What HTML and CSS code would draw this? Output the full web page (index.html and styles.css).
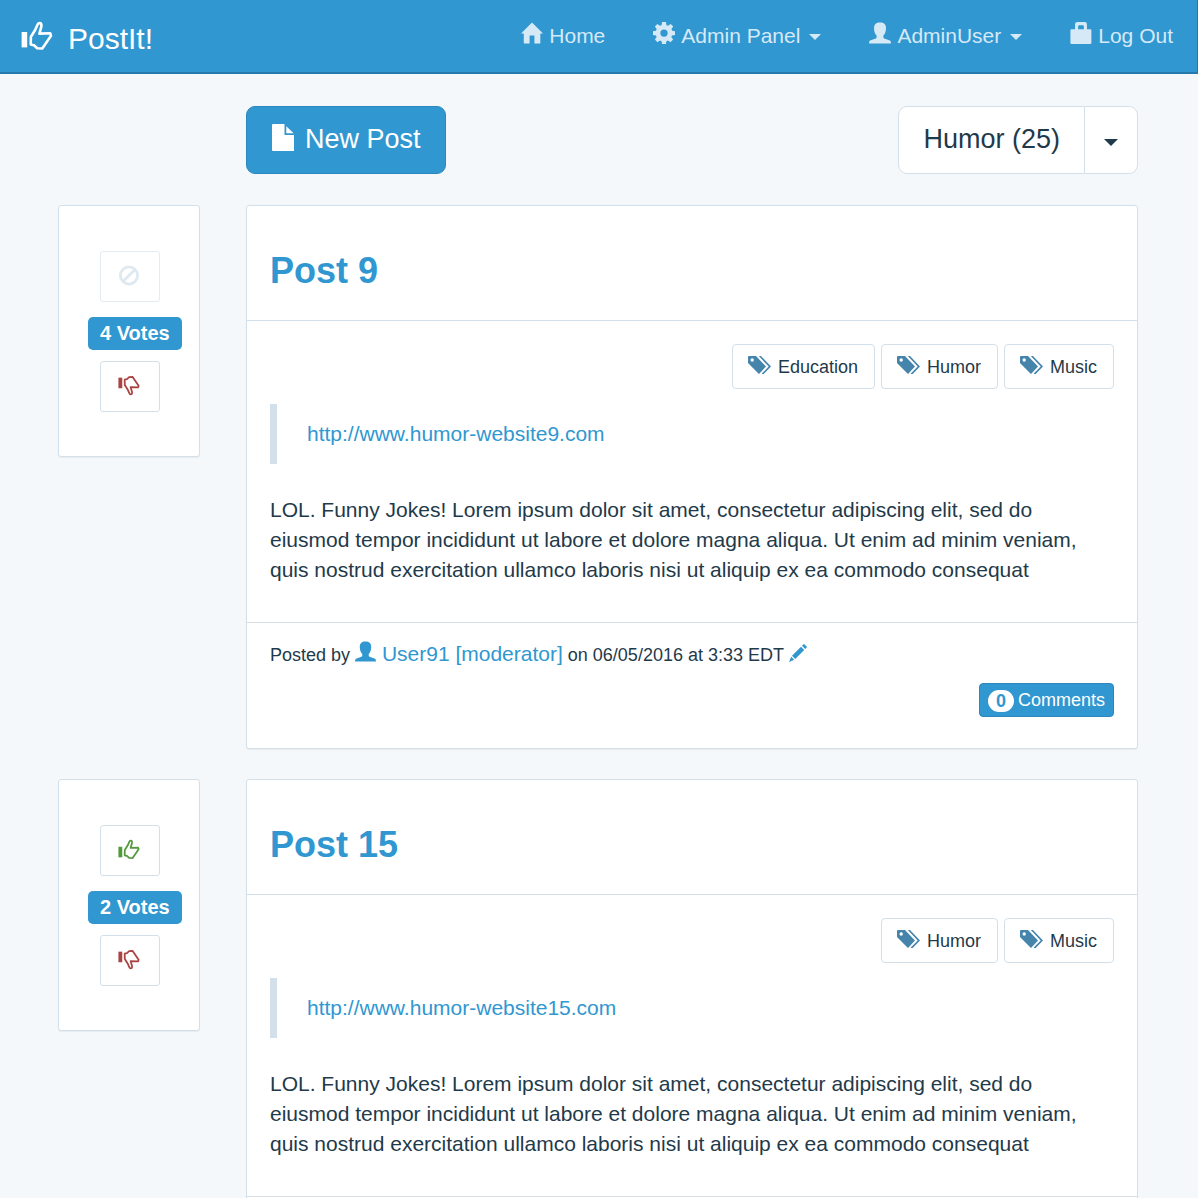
FILE: index.html
```html
<!DOCTYPE html>
<html lang="en">
<head>
<meta charset="utf-8">
<meta name="viewport" content="width=device-width, initial-scale=1">
<title>PostIt!</title>
<link rel="stylesheet" href="styles.css">
</head>
<body>
<svg class="sprite" aria-hidden="true">
  <symbol id="thumb" viewBox="0 0 32 30">
    <rect x="0.6" y="11" width="5.6" height="15.4" fill="currentColor"/>
    <path d="M9.9 15.7 9.7 23.4 13 24.2 16.2 27.2 21.3 27.5 30 14.8 29.2 12.2 18.4 12.6 20.4 5.4Q20.8 2 18.6 2.1 17 2 16.4 4L14 9.2Z" fill="none" stroke="currentColor" stroke-width="2.6" stroke-linejoin="round"/>
  </symbol>
  <symbol id="home" viewBox="0 0 23 22">
    <path d="M11.5 0 23 11.5H20.2V22H14V13.6H9V22H2.9V11.5H0Z" fill="currentColor"/>
  </symbol>
  <symbol id="cog" viewBox="0 0 21 21">
    <path fill="currentColor" fill-rule="evenodd" d="M8.7 0h3.6l.6 3 1.4.6L16.9 2l2.4 2.4-1.7 2.4.7 1.6 2.7.5v3.5l-2.9.5-.6 1.5 1.7 2.4-2.5 2.5-2.4-1.7-1.5.7-.5 2.9H8.7l-.5-2.9-1.6-.7-2.3 1.7-2.5-2.5 1.7-2.4-.7-1.5L0 12.4V8.9l2.8-.5.7-1.6-1.7-2.4L4.2 2l2.5 1.6L8.1 3ZM10.5 7.1a3.5 3.5 0 1 0 0 7 3.5 3.5 0 0 0 0-7Z"/>
  </symbol>
  <symbol id="user" viewBox="0 0 22 21">
    <path fill="currentColor" d="M11 0C15 0 17 2 17 5.6 17 9 16 11.9 14.4 13V15C14.4 15.5 14.6 15.7 15.2 16L21 18Q22 18.6 22 21H0Q0 18.6 1 18L6.8 16C7.4 15.7 7.6 15.5 7.6 15V13C6 11.9 5 9 5 5.6 5 2 7 0 11 0Z"/>
  </symbol>
  <symbol id="lock" viewBox="0 0 21 21">
    <path fill="currentColor" fill-rule="evenodd" d="M4.8 7V2.2Q4.8 0 7 0h7q2.2 0 2.2 2.2V7h3.2q1 0 1 1v12q0 1-1 1H1.4q-1 0-1-1V8q0-1 1-1ZM7.8 7h5.4V4.2q0-1.2-1.2-1.2H9q-1.2 0-1.2 1.2Z"/>
  </symbol>
  <symbol id="file" viewBox="0 0 22 27">
    <path fill="currentColor" d="M0 1q0-1 1-1h11.5v11H22v16H1q-1 0-1-1ZM14.3 2.3 21.6 9.2H14.3Z"/>
  </symbol>
  <symbol id="ban" viewBox="0 0 22 22">
    <g fill="none" stroke="currentColor" stroke-width="3"><circle cx="11" cy="11" r="9"/><path d="M4.6 17.4 17.4 4.6"/></g>
  </symbol>
  <symbol id="tags" viewBox="0 0 23 18">
    <path fill="currentColor" fill-rule="evenodd" d="M0 1Q0 0 1 0H8L18 10.5 11 18 0 7ZM4.2 2.3a1.7 1.7 0 1 0 0 3.4 1.7 1.7 0 0 0 0-3.4Z"/>
    <path fill="currentColor" d="M10.8 0h2.2L23 10.6 15.7 18h-1.6L13.8 17.6 20.7 10.6Z"/>
  </symbol>
  <symbol id="pencil" viewBox="0 0 18 18">
    <path fill="currentColor" d="M14.4.4q.6-.6 1.2 0l2 2q.6.6 0 1.2L16.2 5 13 1.8ZM12 2.8 15.2 6 6.2 15 3 11.8ZM2.2 12.8 5.2 15.8 0 18Z"/>
  </symbol>
</svg>

<header class="navbar">
  <a class="brand" href="#"><svg class="icon-brand" aria-hidden="true"><use href="#thumb"/></svg>PostIt!</a>
  <nav class="nav">
    <a class="nav-item" href="#"><svg class="icon-nav" aria-hidden="true"><use href="#home"/></svg>Home</a>
    <button class="nav-item" type="button"><svg class="icon-nav" aria-hidden="true"><use href="#cog"/></svg>Admin Panel<span class="caret"></span></button>
    <button class="nav-item" type="button"><svg class="icon-nav" aria-hidden="true"><use href="#user"/></svg>AdminUser<span class="caret"></span></button>
    <a class="nav-item" href="#"><svg class="icon-nav" aria-hidden="true"><use href="#lock"/></svg>Log Out</a>
  </nav>
</header>

<main class="container">
  <div class="toolbar">
    <button class="new-post" type="button"><svg class="icon-file" aria-hidden="true"><use href="#file"/></svg>New Post</button>
    <div class="btn-group">
      <button class="group-label" type="button">Humor (25)</button>
      <button class="group-toggle" type="button" aria-label="Choose category"><span class="caret caret-large"></span></button>
    </div>
  </div>

  <section class="row">
    <aside class="votes">
      <button class="vote" type="button" disabled aria-label="Vote up"><svg class="icon-vote" aria-hidden="true"><use href="#ban"/></svg></button>
      <span class="vote-count">4 Votes</span>
      <button class="vote vote-down" type="button" aria-label="Vote down"><svg class="icon-vote" aria-hidden="true"><use href="#thumb"/></svg></button>
    </aside>
    <article class="post">
      <h2 class="post-title"><a href="#">Post 9</a></h2>
      <div class="post-body">
        <div class="tags">
          <a class="tag" href="#"><svg class="icon-tag" aria-hidden="true"><use href="#tags"/></svg>Education</a>
          <a class="tag" href="#"><svg class="icon-tag" aria-hidden="true"><use href="#tags"/></svg>Humor</a>
          <a class="tag" href="#"><svg class="icon-tag" aria-hidden="true"><use href="#tags"/></svg>Music</a>
        </div>
        <blockquote class="source"><a href="#">http://www.humor-website9.com</a></blockquote>
        <p class="text">LOL. Funny Jokes! Lorem ipsum dolor sit amet, consectetur adipiscing elit, sed do eiusmod tempor incididunt ut labore et dolore magna aliqua. Ut enim ad minim veniam, quis nostrud exercitation ullamco laboris nisi ut aliquip ex ea commodo consequat</p>
      </div>
      <footer class="post-footer">
        <div class="byline">Posted by <a class="author" href="#"><svg class="icon-user" aria-hidden="true"><use href="#user"/></svg> User91 [moderator]</a> on 06/05/2016 at 3:33 EDT <a href="#" aria-label="Edit"><svg class="icon-pencil" aria-hidden="true"><use href="#pencil"/></svg></a></div>
        <button class="comments" type="button"><span class="count">0</span>Comments</button>
      </footer>
    </article>
  </section>

  <section class="row">
    <aside class="votes">
      <button class="vote vote-up" type="button" aria-label="Vote up"><svg class="icon-vote" aria-hidden="true"><use href="#thumb"/></svg></button>
      <span class="vote-count">2 Votes</span>
      <button class="vote vote-down" type="button" aria-label="Vote down"><svg class="icon-vote" aria-hidden="true"><use href="#thumb"/></svg></button>
    </aside>
    <article class="post">
      <h2 class="post-title"><a href="#">Post 15</a></h2>
      <div class="post-body">
        <div class="tags">
          <a class="tag" href="#"><svg class="icon-tag" aria-hidden="true"><use href="#tags"/></svg>Humor</a>
          <a class="tag" href="#"><svg class="icon-tag" aria-hidden="true"><use href="#tags"/></svg>Music</a>
        </div>
        <blockquote class="source"><a href="#">http://www.humor-website15.com</a></blockquote>
        <p class="text">LOL. Funny Jokes! Lorem ipsum dolor sit amet, consectetur adipiscing elit, sed do eiusmod tempor incididunt ut labore et dolore magna aliqua. Ut enim ad minim veniam, quis nostrud exercitation ullamco laboris nisi ut aliquip ex ea commodo consequat</p>
      </div>
      <footer class="post-footer"></footer>
    </article>
  </section>
</main>
</body>
</html>
```
FILE: styles.css
```css
* { box-sizing: border-box; }

body {
  margin: 0;
  background: #f4f8fb;
  color: #1f3a4a;
  font: 21px/30px "Liberation Sans", Arial, sans-serif;
}

a { color: #3097d1; text-decoration: none; }
button { font: inherit; color: inherit; cursor: pointer; }
.sprite { display: none; }

/* Navigation bar */
.navbar {
  display: flex;
  justify-content: space-between;
  align-items: flex-start;
  padding: 21px 24px 15px 21px;
  background: #3097d1;
  border-right: 1px solid #2578aa;
  border-bottom: 2px solid #2579ab;
}
.brand {
  display: flex;
  align-items: flex-start;
  gap: 15px;
  color: #fff;
  font-size: 30px;
  line-height: 36px;
}
.icon-brand { width: 32px; height: 30px; }
.nav { display: flex; gap: 48px; }
.nav-item {
  display: flex;
  align-items: center;
  padding: 0;
  border: 0;
  background: none;
  color: #d6e9f6;
}
.icon-nav { width: 22px; height: 22px; margin: 0 6px 6px 0; }
.caret {
  margin: 2px 0 0 9px;
  border: solid transparent;
  border-width: 6px 6px 0;
  border-top-color: currentColor;
}

/* Page grid */
.container { padding: 32px 60px 30px 58px; }
.toolbar {
  display: flex;
  justify-content: space-between;
  margin: 0 0 31px 188px;
}
.row {
  display: grid;
  grid-template-columns: 142px 1fr;
  gap: 46px;
  align-items: start;
  margin-bottom: 30px;
}

/* Toolbar buttons */
.new-post {
  display: flex;
  align-items: center;
  gap: 11px;
  padding: 15px 24px 17px 25px;
  border: 1px solid #2a88bd;
  border-radius: 9px;
  background: #3097d1;
  color: #fff;
  font-size: 27px;
  line-height: 34px;
}
.icon-file { width: 22px; height: 27px; margin-bottom: 3px; }
.btn-group { display: flex; }
.group-label, .group-toggle {
  padding: 15px 24px 17px;
  border: 1px solid #d3e0e9;
  background: #fff;
  font-size: 27px;
  line-height: 34px;
}
.group-label { border-radius: 9px 0 0 9px; }
.group-toggle {
  padding: 0 19px;
  border-left: 0;
  border-radius: 0 9px 9px 0;
}
.caret-large {
  display: block;
  margin: 4px 0 0;
  border-width: 7px 7px 0;
}

/* Vote panel */
.votes, .post {
  background: #fff;
  border: 1px solid #d3e0e9;
  border-radius: 3px;
  box-shadow: 0 1px 1px rgba(0, 0, 0, .05);
}
.votes {
  display: flex;
  flex-direction: column;
  align-items: flex-start;
  padding: 45px 0 44px 29px;
}
.vote {
  display: flex;
  justify-content: center;
  align-items: center;
  width: 60px;
  height: 51px;
  margin-left: 12px;
  padding: 0 2px 2px 0;
  border: 1px solid #d3e0e9;
  border-radius: 3px;
  background: #fff;
}
.vote:disabled { color: #dfe9f0; border-color: #e3ecf2; cursor: not-allowed; }
.vote-up { color: #539a3c; }
.vote-down { color: #a94442; }
.icon-vote { width: 22px; height: 21px; }
.vote-down .icon-vote { transform: scaleY(-1); }
.vote-count {
  margin: 15px 0 11px;
  padding: 0 12px 1px;
  border-radius: 5px;
  background: #3097d1;
  color: #fff;
  font-size: 20px;
  font-weight: bold;
  line-height: 32px;
}

/* Post card */
.post-title {
  margin: 0;
  padding: 45px 23px 29px;
  border-bottom: 1px solid #d3e0e9;
  font-size: 36px;
  line-height: 40px;
}
.post-body { padding: 23px 23px 37px; }
.tags { display: flex; justify-content: flex-end; gap: 6px; }
.tag {
  display: flex;
  align-items: center;
  gap: 7px;
  padding: 9px 16px 8px 15px;
  border: 1px solid #d3e0e9;
  border-radius: 4px;
  color: #1f3a4a;
  font-size: 18px;
  line-height: 26px;
}
.icon-tag { width: 23px; height: 18px; margin-bottom: 4px; color: #4585ab; }
.source {
  margin: 15px 0 31px;
  padding: 15px 30px;
  border-left: 7px solid #d3e0e9;
}
.text { margin: 0; }
.post-footer {
  display: flex;
  flex-direction: column;
  min-height: 126px;
  padding: 16px 23px 31px;
  border-top: 1px solid #d9dfe3;
}
.byline { font-size: 18px; }
.author { font-size: 21px; }
.icon-user { width: 21px; height: 21px; vertical-align: -1px; }
.icon-pencil { width: 18px; height: 18px; vertical-align: -1px; }
.comments {
  display: flex;
  align-items: center;
  align-self: flex-end;
  gap: 4px;
  margin-top: 13px;
  padding: 4px 8px;
  border: 1px solid #2a88bd;
  border-radius: 4px;
  background: #3097d1;
  color: #fff;
  font-size: 18px;
  line-height: 24px;
}
.count {
  margin-top: 2px;
  padding: 0 8px;
  border-radius: 11px;
  background: #fff;
  color: #3097d1;
  font-weight: bold;
  line-height: 22px;
}
```
